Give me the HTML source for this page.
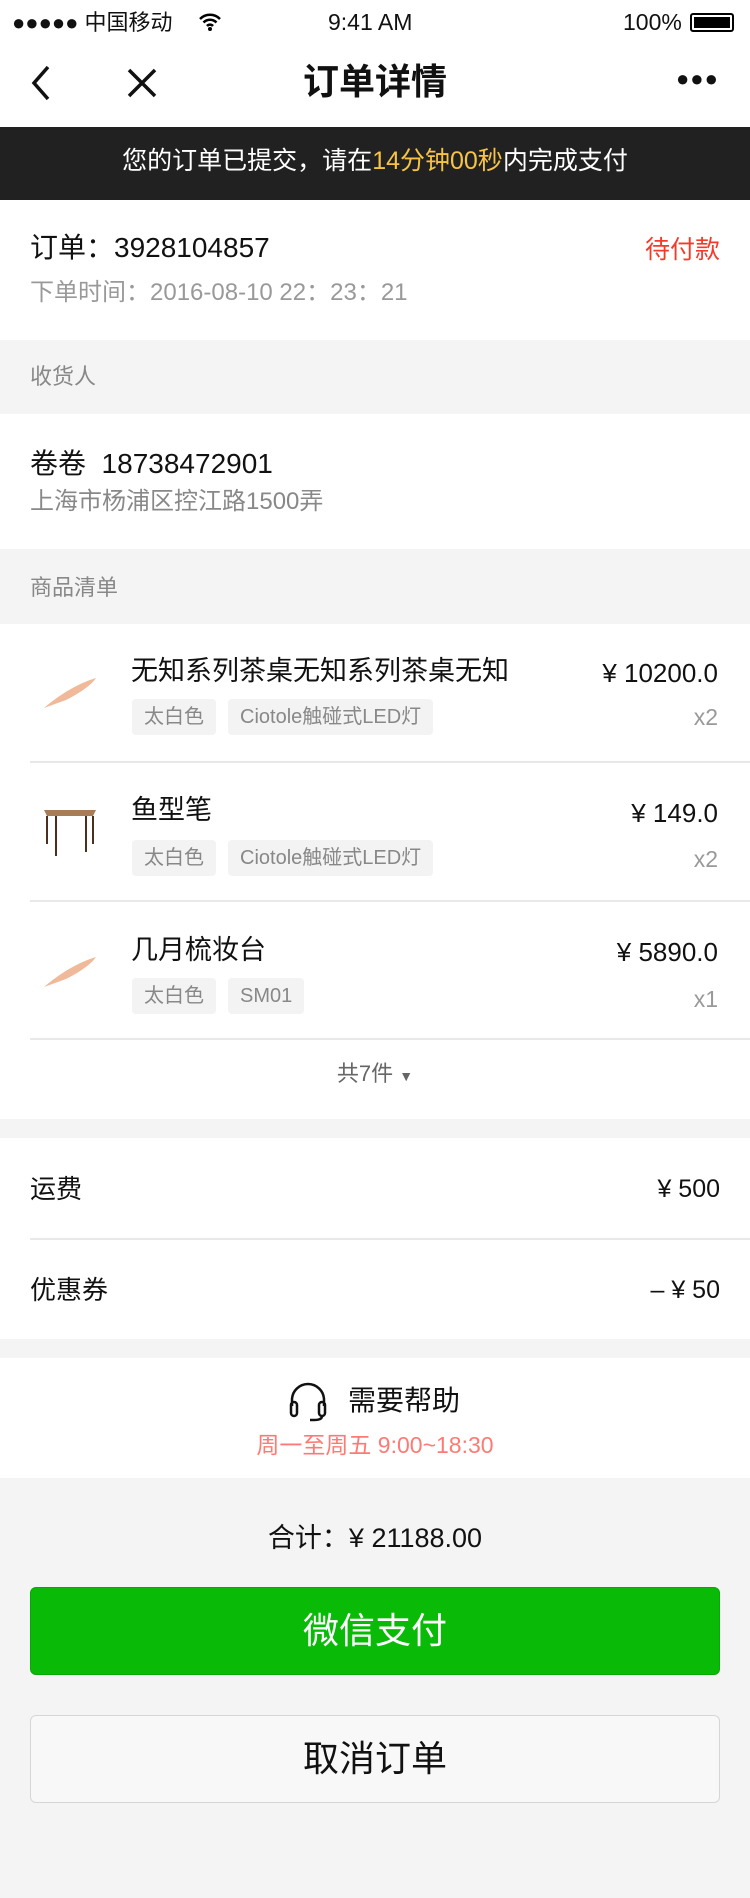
<!DOCTYPE html>
<html><head><meta charset="utf-8"><style>
*{margin:0;padding:0;box-sizing:border-box}
body{width:750px;height:1898px;background:#f4f4f4;font-family:"Liberation Sans","Noto Sans CJK SC",sans-serif;color:#111;position:relative;overflow:hidden}
.abs{position:absolute}
.white{position:absolute;left:0;width:750px;background:#fff}
.t{position:absolute;white-space:nowrap;line-height:1}
.tag{position:absolute;height:36px;line-height:36px;background:#f3f3f3;color:#888;font-size:20px;padding:0 12px;border-radius:4px}
.div{position:absolute;left:30px;right:0;height:2px;background:#e8e8e8}
</style></head><body>
<div class="white" style="top:0;height:127px"></div>
<div class="t" style="left:12px;top:12px;font-size:22px">●●●●● 中国移动</div>
<svg class="abs" style="left:198px;top:12px" width="24" height="20" viewBox="0 0 24 20"><path d="M2 7a14 14 0 0 1 20 0M5.5 10.5a9 9 0 0 1 13 0M9 14a4 4 0 0 1 6 0" stroke="#000" stroke-width="2.5" fill="none"/><circle cx="12" cy="17" r="2" fill="#000"/></svg>
<div class="t" style="left:328px;top:11px;font-size:23px">9:41 AM</div>
<div class="t" style="left:623px;top:11px;font-size:23px">100%</div>
<div class="abs" style="left:690px;top:13px;width:44px;height:19px;border:2px solid #000;border-radius:3px;padding:2px"><div style="background:#000;width:100%;height:100%"></div></div>
<svg class="abs" style="left:28px;top:64px" width="24" height="38" viewBox="0 0 24 38"><path d="M20 3L6 19l14 16" stroke="#111" stroke-width="3.5" fill="none"/></svg>
<svg class="abs" style="left:126px;top:67px" width="32" height="32" viewBox="0 0 32 32"><path d="M3 3l26 26M29 3L3 29" stroke="#111" stroke-width="3.5"/></svg>
<div class="t" style="left:0;width:750px;text-align:center;top:64px;font-size:36px;font-weight:bold">订单详情</div>
<div class="t" style="left:676px;top:68px;font-size:22px;letter-spacing:1px">●●●</div>
<div class="abs" style="left:0;top:127px;width:750px;height:73px;background:#212121"></div>
<div class="t" style="left:0;width:750px;text-align:center;top:149px;font-size:25px;color:#fff">您的订单已提交，请在<span style="color:#f6c344">14分钟00秒</span>内完成支付</div>
<div class="white" style="top:200px;height:140px"></div>
<div class="t" style="left:30px;top:234px;font-size:28px">订单：3928104857</div>
<div class="t" style="right:30px;top:238px;font-size:25px;color:#f43b2a">待付款</div>
<div class="t" style="left:30px;top:281px;font-size:24px;color:#999">下单时间：2016-08-10 22：23：21</div>
<div class="t" style="left:30px;top:366px;font-size:22px;color:#888">收货人</div>
<div class="white" style="top:414px;height:135px"></div>
<div class="t" style="left:30px;top:450px;font-size:28px">卷卷&nbsp;&nbsp;18738472901</div>
<div class="t" style="left:30px;top:490px;font-size:24px;color:#888">上海市杨浦区控江路1500弄</div>
<div class="t" style="left:30px;top:577px;font-size:22px;color:#888">商品清单</div>
<div class="white" style="top:624px;height:495px"></div>
<svg class="abs" style="left:40px;top:666px" width="60" height="50" viewBox="0 0 60 50"><path d="M4 42C18 30 36 18 56 12c-4 6-14 14-30 22z" fill="#f0b99a"/></svg>
<div class="t" style="left:131px;top:658px;font-size:27px">无知系列茶桌无知系列茶桌无知</div>
<div class="t" style="right:32px;top:660px;font-size:26px">¥ 10200.0</div>
<div class="tag" style="left:132px;top:699px">太白色</div>
<div class="tag" style="left:228px;top:699px">Ciotole触碰式LED灯</div>
<div class="t" style="right:32px;top:706px;font-size:23px;color:#999">x2</div>
<div class="div" style="top:761px"></div>
<svg class="abs" style="left:40px;top:800px" width="60" height="60" viewBox="0 0 60 60"><path d="M4 10h52l-3 6H7z" fill="#a77d57"/><path d="M7 16v28M53 16v28M16 16v40M46 16v36" stroke="#4b3020" stroke-width="2"/></svg>
<div class="t" style="left:131px;top:797px;font-size:27px">鱼型笔</div>
<div class="t" style="right:32px;top:800px;font-size:26px">¥ 149.0</div>
<div class="tag" style="left:132px;top:840px">太白色</div>
<div class="tag" style="left:228px;top:840px">Ciotole触碰式LED灯</div>
<div class="t" style="right:32px;top:848px;font-size:23px;color:#999">x2</div>
<div class="div" style="top:900px"></div>
<svg class="abs" style="left:40px;top:945px" width="60" height="50" viewBox="0 0 60 50"><path d="M4 42C18 30 36 18 56 12c-4 6-14 14-30 22z" fill="#f0b99a"/></svg>
<div class="t" style="left:131px;top:937px;font-size:27px">几月梳妆台</div>
<div class="t" style="right:32px;top:939px;font-size:26px">¥ 5890.0</div>
<div class="tag" style="left:132px;top:978px">太白色</div>
<div class="tag" style="left:228px;top:978px">SM01</div>
<div class="t" style="right:32px;top:988px;font-size:23px;color:#999">x1</div>
<div class="div" style="top:1038px"></div>
<div class="t" style="left:0;width:750px;text-align:center;top:1063px;font-size:22px;color:#666">共7件 <span style="font-size:14px">▼</span></div>
<div class="white" style="top:1138px;height:201px"></div>
<div class="t" style="left:30px;top:1176px;font-size:26px">运费</div>
<div class="t" style="right:30px;top:1177px;font-size:25px">¥ 500</div>
<div class="div" style="top:1238px"></div>
<div class="t" style="left:30px;top:1277px;font-size:26px">优惠券</div>
<div class="t" style="right:30px;top:1278px;font-size:25px">– ¥ 50</div>
<div class="white" style="top:1358px;height:120px"></div>
<svg class="abs" style="left:288px;top:1382px" width="40" height="40" viewBox="0 0 40 40"><path d="M4 24v-6a16 16 0 0 1 32 0v6" stroke="#111" stroke-width="2.5" fill="none"/><rect x="3" y="20" width="6" height="14" rx="3" stroke="#111" stroke-width="2.5" fill="none"/><rect x="31" y="20" width="6" height="14" rx="3" stroke="#111" stroke-width="2.5" fill="none"/><path d="M34 34q0 4-8 4h-4" stroke="#111" stroke-width="2.5" fill="none"/></svg>
<div class="t" style="left:348px;top:1387px;font-size:28px">需要帮助</div>
<div class="t" style="left:0;width:750px;text-align:center;top:1434px;font-size:23px;color:#ff7a74">周一至周五 9:00~18:30</div>
<div class="t" style="left:0;width:750px;text-align:center;top:1525px;font-size:27px">合计：¥ 21188.00</div>
<div class="abs" style="left:30px;top:1587px;width:690px;height:88px;background:#09bb07;border-radius:6px;border:1px solid #07a905;color:#fff;font-size:36px;text-align:center;line-height:86px">微信支付</div>
<div class="abs" style="left:30px;top:1715px;width:690px;height:88px;background:#f8f8f8;border-radius:6px;border:1px solid #d6d6d6;color:#111;font-size:36px;text-align:center;line-height:86px">取消订单</div>
</body></html>
